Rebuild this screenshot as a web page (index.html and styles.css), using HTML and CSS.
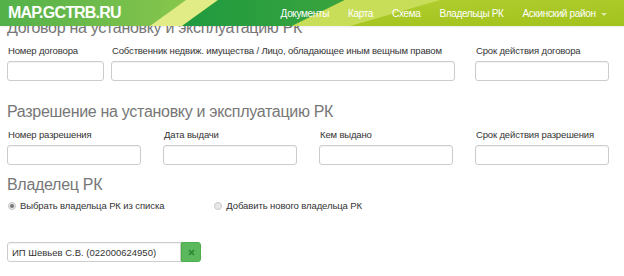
FILE: index.html
```html
<!DOCTYPE html>
<html lang="ru">
<head>
    <meta charset="UTF-8">
    <meta name="viewport" content="width=device-width, initial-scale=1.0">
    <title>MAP.GCTRB.RU</title>
    <link rel="stylesheet" href="styles.css">
</head>
<body>
    <nav class="navbar">
        <svg class="navbar-bg" viewBox="0 0 624 26" preserveAspectRatio="none">
            <defs>
                <linearGradient id="gLeft" x1="0" x2="1" y1="0" y2="0">
                    <stop offset="0" stop-color="#52b04a"/>
                    <stop offset="1" stop-color="#8cc84c"/>
                </linearGradient>
                <linearGradient id="gDark" x1="0" x2="1" y1="0" y2="0">
                    <stop offset="0" stop-color="#1f9a3f"/>
                    <stop offset="1" stop-color="#3aa43e"/>
                </linearGradient>
                <linearGradient id="gRight" x1="0" x2="1" y1="0" y2="1">
                    <stop offset="0" stop-color="#b6d236"/>
                    <stop offset="1" stop-color="#a2c21c"/>
                </linearGradient>
            </defs>
            <rect x="0" y="0" width="624" height="26" fill="url(#gRight)"/>
            <rect x="0" y="0" width="200" height="26" fill="url(#gLeft)"/>
            <polygon points="186,0 218,0 182,26 150,26" fill="#e2ec86"/>
            <polygon points="218,0 345,0 292,26 182,26" fill="url(#gDark)"/>
            <polygon points="345,0 440,0 350,26 292,26" fill="#c9de58"/>
        </svg>
        <a class="brand" href="#">MAP.GCTRB.RU</a>
        <ul class="nav-links">
            <li><a href="#">Документы</a></li>
            <li><a href="#">Карта</a></li>
            <li><a href="#">Схема</a></li>
            <li><a href="#">Владельцы РК</a></li>
            <li><a href="#" class="dropdown">Аскинский район <span class="caret"></span></a></li>
        </ul>
    </nav>

    <main class="content">
        <section class="block block-contract">
            <h2>Договор на установку и эксплуатацию РК</h2>
            <div class="form-row">
                <div class="pair">
                    <div class="field">
                        <label>Номер договора</label>
                        <input type="text" class="form-control">
                    </div>
                    <div class="field">
                        <label>Собственник недвиж. имущества / Лицо, обладающее иным вещным правом</label>
                        <input type="text" class="form-control">
                    </div>
                </div>
                <div class="field">
                    <label>Срок действия договора</label>
                    <input type="text" class="form-control">
                </div>
            </div>
        </section>

        <section class="block block-permit">
            <h2>Разрешение на установку и эксплуатацию РК</h2>
            <div class="form-row">
                <div class="field">
                    <label>Номер разрешения</label>
                    <input type="text" class="form-control">
                </div>
                <div class="field">
                    <label>Дата выдачи</label>
                    <input type="text" class="form-control">
                </div>
                <div class="field">
                    <label>Кем выдано</label>
                    <input type="text" class="form-control">
                </div>
                <div class="field">
                    <label>Срок действия разрешения</label>
                    <input type="text" class="form-control">
                </div>
            </div>
        </section>

        <section class="block block-owner">
            <h2>Владелец РК</h2>
            <div class="radios">
                <label class="radio"><input type="radio" name="owner" checked> Выбрать владельца РК из списка</label>
                <label class="radio radio-new"><input type="radio" name="owner"> Добавить нового владельца РК</label>
            </div>
            <div class="owner-select">
                <input type="text" class="form-control owner-input" value="ИП Шевьев С.В. (022000624950)">
                <button class="btn-clear" type="button">
                    <svg viewBox="0 0 10 10" width="7" height="7"><path d="M1.5 1.5 L8.5 8.5 M8.5 1.5 L1.5 8.5" stroke="#2f8a36" stroke-width="2.4"/></svg>
                </button>
            </div>
        </section>
    </main>
</body>
</html>
```

FILE: styles.css
```css
body {
    margin: 0;
    font-family: "Liberation Sans", Arial, sans-serif;
    font-size: 11px;
    color: #333;
    background: #fff;
    overflow: hidden;
}
.navbar {
    position: fixed;
    top: 0;
    left: 0;
    right: 0;
    height: 26px;
    display: flex;
    align-items: center;
    justify-content: space-between;
    z-index: 10;
    box-shadow: 0 1px 2px rgba(0, 0, 0, 0.08);
}
.navbar-bg {
    position: absolute;
    top: 0;
    left: 0;
    width: 100%;
    height: 100%;
    z-index: -1;
}
.brand {
    padding-left: 8px;
    color: #fff;
    font-size: 16px;
    font-weight: bold;
    text-decoration: none;
    letter-spacing: -0.8px;
}
.nav-links {
    list-style: none;
    margin: 0;
    padding: 0 17px 0 0;
    display: flex;
    gap: 19px;
}
.nav-links a {
    color: #fff;
    text-decoration: none;
    font-size: 10px;
    letter-spacing: -0.35px;
}
.caret {
    display: inline-block;
    width: 0;
    height: 0;
    margin-left: 3px;
    vertical-align: middle;
    border-top: 3px solid rgba(255, 255, 255, 0.6);
    border-left: 3px solid transparent;
    border-right: 3px solid transparent;
}
.content {
    padding: 18px 15px 0 7px;
}
h2 {
    margin: 0;
    font-size: 16px;
    line-height: 20px;
    font-weight: normal;
    letter-spacing: -0.3px;
    color: #777;
}
.block-permit {
    margin-top: 21px;
}
.block-owner {
    margin-top: 10px;
}
.form-row {
    display: grid;
    grid-template-columns: repeat(4, 134px);
    column-gap: 22px;
    margin-top: 6px;
}
.pair {
    grid-column: span 3;
    display: grid;
    grid-template-columns: 97px 1fr;
    column-gap: 7px;
    margin-right: -2px;
}
.field label {
    display: block;
    padding-left: 1px;
    font-size: 9.5px;
    letter-spacing: -0.15px;
    line-height: 14px;
    margin-bottom: 3px;
    white-space: nowrap;
}
.form-control {
    box-sizing: border-box;
    display: block;
    width: 100%;
    height: 20px;
    margin: 0;
    padding: 2px 4px;
    border: 1px solid #ccc;
    border-radius: 3px;
    background: #fff;
    font-family: inherit;
    font-size: 9.5px;
    color: #333;
    box-shadow: inset 0 1px 1px rgba(0, 0, 0, 0.05);
}
.radios {
    display: flex;
    margin-top: 4px;
    line-height: 14px;
    font-size: 9.5px;
    letter-spacing: -0.1px;
}
.radio {
    display: flex;
    align-items: center;
    gap: 4px;
    padding-left: 1px;
}
.radio-new {
    margin-left: 49px;
}
.radio input {
    appearance: none;
    -webkit-appearance: none;
    margin: 0;
    width: 8px;
    height: 8px;
    border: 1px solid #c8c8c8;
    border-radius: 50%;
    background: #e8e8e8;
    position: relative;
}
.radio input:checked::after {
    content: "";
    position: absolute;
    top: 1px;
    left: 1px;
    width: 4px;
    height: 4px;
    border-radius: 50%;
    background: #777;
}
.owner-select {
    display: flex;
    margin-top: 29px;
    width: 194px;
}
.owner-input {
    flex: 1;
    border-radius: 3px 0 0 3px;
    padding-left: 4px;
}
.btn-clear {
    width: 20px;
    height: 20px;
    padding: 0;
    border: 1px solid #4cae4c;
    border-radius: 0 3px 3px 0;
    background: #5cb85c;
    display: flex;
    align-items: center;
    justify-content: center;
}
```
